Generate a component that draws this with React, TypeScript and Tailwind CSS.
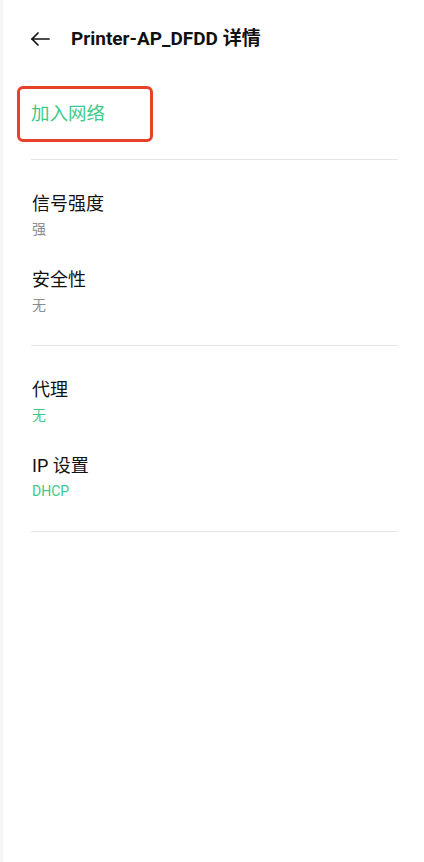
import React from "react";

const font = { fontFamily: '"Roboto", "Noto Sans CJK SC", sans-serif' };

function Item({ title, sub, green }: { title: string; sub: string; green?: boolean }) {
  return (
    <div className="flex flex-col">
      <div className="text-[18px] leading-[24px] text-[#111111]">{title}</div>
      <div className={"mt-[4px] text-[14px] leading-[18px] " + (green ? "text-[#3dc98a]" : "text-[#8c8c8c]")}>{sub}</div>
    </div>
  );
}

export default function App() {
  return (
    <div className="w-[424px] h-[862px] bg-white flex" style={font}>
      <div className="w-[3px] h-full bg-[#f5f5f5]" />
      <div className="flex-1 flex flex-col">
        <div className="h-[78px] flex items-center">
          <div className="ml-[27px] w-[20px] flex items-center">
            <svg width="20" height="16" viewBox="0 0 20 16" fill="none" stroke="#111" strokeWidth="1.7" strokeLinecap="round" strokeLinejoin="round">
              <path d="M19 8H2" />
              <path d="M8 2L2 8l6 6" />
            </svg>
          </div>
          <div className="ml-[21px] text-[19px] font-bold text-[#111111] leading-[24px]">Printer-AP_DFDD 详情</div>
        </div>
        <div className="mt-[8px] ml-[14px] w-[136px] h-[56px] border-[3px] border-[#e8412b] rounded-[6px] flex items-center">
          <span className="ml-[11px] text-[18.5px] leading-[24px] text-[#3dc98a]">加入网络</span>
        </div>
        <div className="mt-[17px] ml-[28px] w-[367px] h-px bg-[#e6e6e6]" />
        <div className="pl-[29px] pt-[32px] pb-[31px] flex flex-col gap-[30px]">
          <Item title="信号强度" sub="强" />
          <Item title="安全性" sub="无" />
        </div>
        <div className="ml-[28px] w-[367px] h-px bg-[#e6e6e6]" />
        <div className="pl-[29px] pt-[32px] pb-[31px] flex flex-col gap-[30px]">
          <Item title="代理" sub="无" green />
          <Item title="IP 设置" sub="DHCP" green />
        </div>
        <div className="ml-[28px] w-[367px] h-px bg-[#e6e6e6]" />
      </div>
    </div>
  );
}
